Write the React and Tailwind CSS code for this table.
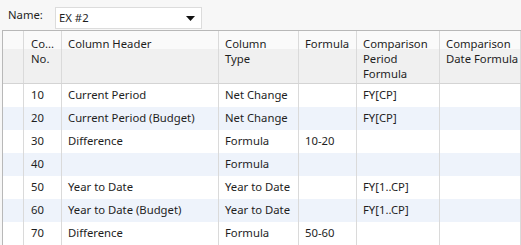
import React from 'react';

const rows = [
  { no: '10', header: 'Current Period', type: 'Net Change', formula: '', period: 'FY[CP]' },
  { no: '20', header: 'Current Period (Budget)', type: 'Net Change', formula: '', period: 'FY[CP]' },
  { no: '30', header: 'Difference', type: 'Formula', formula: '10-20', period: '' },
  { no: '40', header: '', type: 'Formula', formula: '', period: '' },
  { no: '50', header: 'Year to Date', type: 'Year to Date', formula: '', period: 'FY[1..CP]' },
  { no: '60', header: 'Year to Date (Budget)', type: 'Year to Date', formula: '', period: 'FY[1..CP]' },
  { no: '70', header: 'Difference', type: 'Formula', formula: '50-60', period: '' },
];

const cols = 'grid grid-cols-[21px_38px_157px_80px_58px_83px_1fr]';
const cell = 'border-r border-[#dadada] px-[6px] whitespace-nowrap overflow-hidden';

const App = () => {
  return (
    <div
      className="w-[521px] h-[245px] overflow-hidden bg-[#f7f7f7] text-[11.3px] text-[#1e1e1e]"
      style={{ fontFamily: '"Noto Sans", "Open Sans", sans-serif' }}
    >
      <div className="flex items-center h-[30px] pl-[8px]">
        <span className="w-[47px]">Name:</span>
        <div className="flex items-center justify-between w-[147px] h-[22px] mt-[6px] bg-white border border-[#dcdcdc] pl-[3px] pr-[6px]">
          <span>EX #2</span>
          <svg width="9" height="5" viewBox="0 0 9 5">
            <path d="M0 0 L9 0 L4.5 5 Z" fill="#111" />
          </svg>
        </div>
      </div>

      <div className="ml-[2px] border-l border-t border-[#b8b8b8] bg-white">
        <div className={`${cols} h-[53px] border-b border-[#d4d4d4] bg-[linear-gradient(#fafafa_0%,#fafafa_34%,#f0f0f0_34%,#f0f0f0_100%)] leading-[15px]`}>
          <div className={cell}></div>
          <div className={`${cell} pt-[5px] pl-[7px]`}>Co...<br />No.</div>
          <div className={`${cell} pt-[5px]`}>Column Header</div>
          <div className={`${cell} pt-[5px]`}>Column<br />Type</div>
          <div className={`${cell} pt-[5px]`}>Formula</div>
          <div className={`${cell} pt-[5px]`}>Comparison<br />Period<br />Formula</div>
          <div className={`${cell} pt-[5px]`}>Comparison<br />Date Formula</div>
        </div>
        {rows.map((r, i) => (
          <div
            key={r.no}
            className={`${cols} h-[23px] items-stretch ${i % 2 === 1 ? 'bg-[#eef3fb]' : 'bg-white'}`}
          >
            <div className={cell}></div>
            <div className={`${cell} flex items-center pl-[7px]`}>{r.no}</div>
            <div className={`${cell} flex items-center`}>{r.header}</div>
            <div className={`${cell} flex items-center`}>{r.type}</div>
            <div className={`${cell} flex items-center`}>{r.formula}</div>
            <div className={`${cell} flex items-center`}>{r.period}</div>
            <div className={cell}></div>
          </div>
        ))}
      </div>
    </div>
  );
};

export default App;
